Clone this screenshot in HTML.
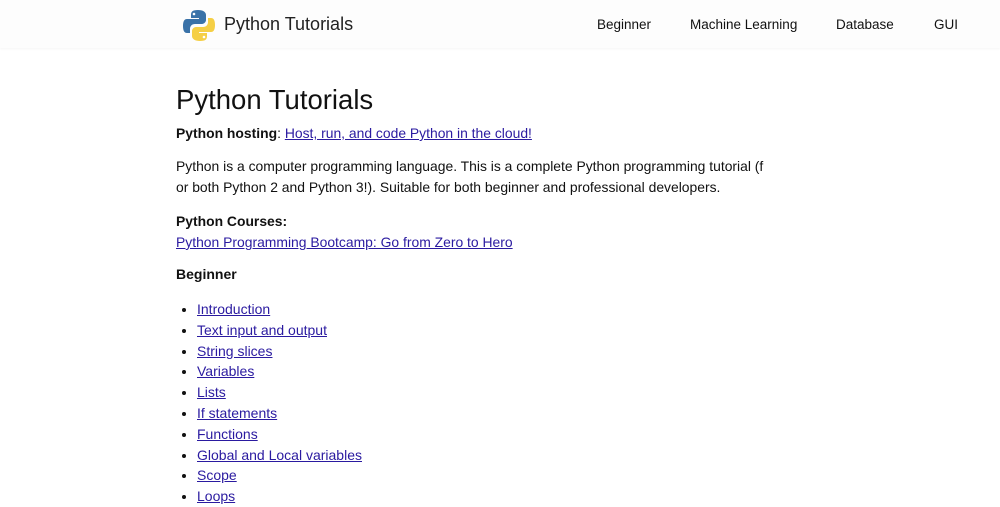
<!DOCTYPE html>
<html><head><meta charset="utf-8"><style>
body{margin:0;width:1000px;height:500px;overflow:hidden;background:#fff;font-family:"Liberation Sans",Arial,sans-serif;color:#111;font-size:14px}
.hdr{position:absolute;left:0;top:0;width:1000px;height:48px;background:#fdfdfd;box-shadow:0 1px 2px rgba(0,0,0,.04)}
.brand{position:absolute;left:224px;top:14px;font-size:18px;color:#222}
.nav{position:absolute;top:17px;font-size:13.5px;color:#111}
a{color:#2a1aa0;text-decoration:underline}
.t{position:absolute;left:176px;white-space:nowrap}
h1{position:absolute;left:176px;top:84px;margin:0;font-size:27.5px;font-weight:normal;color:#111}
ul{position:absolute;left:176px;top:299px;margin:0;padding:0 0 0 21px;list-style:disc;line-height:20.8px}
</style></head><body>
<div class="hdr">
<svg style="position:absolute;left:182px;top:8px" width="34" height="36" viewBox="0 0 34 36">
<path d="M16 2c-6 0-7 2-7 5v3h8v1H5c-3 0-4 3-4 7s1 7 4 7h3v-4c0-3 2-5 5-5h7c2 0 4-2 4-4V7c0-3-3-5-8-5z" fill="#3a72a8"/>
<circle cx="12" cy="6" r="1.3" fill="#fff"/>
<path d="M18 33c6 0 7-2 7-5v-3h-8v-1h12c3 0 4-3 4-7s-1-7-4-7h-3v4c0 3-2 5-5 5h-7c-2 0-4 2-4 4v5c0 3 3 5 8 5z" fill="#f5cf45"/>
<circle cx="22" cy="29" r="1.3" fill="#fff"/>
</svg>
<div class="brand">Python Tutorials</div>
<div class="nav" style="left:597px">Beginner</div>
<div class="nav" style="left:690px">Machine Learning</div>
<div class="nav" style="left:836px">Database</div>
<div class="nav" style="left:934px">GUI</div>
</div>
<h1>Python Tutorials</h1>
<div class="t" style="top:125px;font-size:13.9px"><b>Python hosting</b>: <a>Host, run, and code Python in the cloud!</a></div>
<div class="t" style="top:156px;line-height:21px;font-size:13.9px">Python is a computer programming language. This is a complete Python programming tutorial (f<br>or both Python 2 and Python 3!). Suitable for both beginner and professional developers.</div>
<div class="t" style="top:211px;line-height:21px;font-size:13.9px"><b>Python Courses:</b><br><a>Python Programming Bootcamp: Go from Zero to Hero</a></div>
<div class="t" style="top:266px"><b>Beginner</b></div>
<ul>
<li><a>Introduction</a></li>
<li><a>Text input and output</a></li>
<li><a>String slices</a></li>
<li><a>Variables</a></li>
<li><a>Lists</a></li>
<li><a>If statements</a></li>
<li><a>Functions</a></li>
<li><a>Global and Local variables</a></li>
<li><a>Scope</a></li>
<li><a>Loops</a></li>
</ul>
</body></html>
